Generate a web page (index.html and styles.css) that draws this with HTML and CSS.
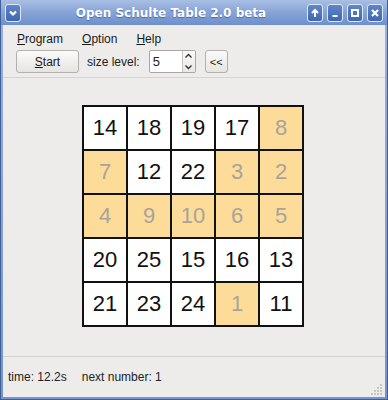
FILE: index.html
```html
<!DOCTYPE html>
<html lang="en">
<head>
    <meta charset="UTF-8">
    <title>Open Schulte Table 2.0 beta</title>
    <link rel="stylesheet" href="styles.css">
</head>
<body>
    <div class="window">
        <div class="titlebar">
            <span class="tb-btn menu-btn">
                <svg width="10" height="10" viewBox="0 0 10 10"><path d="M2 3.5 L5 6.5 L8 3.5" stroke="#fff" stroke-width="2.2" fill="none"/></svg>
            </span>
            <span class="title">Open Schulte Table 2.0 beta</span>
            <span class="tb-btn">
                <svg width="10" height="10" viewBox="0 0 10 10"><path d="M5 9 V2 M2 5 L5 2 L8 5" stroke="#fff" stroke-width="2" fill="none"/></svg>
            </span>
            <span class="tb-btn">
                <svg width="10" height="10" viewBox="0 0 10 10"><rect x="2.5" y="7" width="5" height="2" fill="#fff"/></svg>
            </span>
            <span class="tb-btn">
                <svg width="10" height="10" viewBox="0 0 10 10"><rect x="2" y="2" width="6" height="6" stroke="#fff" stroke-width="2" fill="none"/></svg>
            </span>
            <span class="tb-btn">
                <svg width="10" height="10" viewBox="0 0 10 10"><path d="M2 2 L8 8 M8 2 L2 8" stroke="#fff" stroke-width="2.2" fill="none"/></svg>
            </span>
        </div>

        <div class="content">
            <div class="menubar">
                <span class="menu-item"><u>P</u>rogram</span>
                <span class="menu-item"><u>O</u>ption</span>
                <span class="menu-item"><u>H</u>elp</span>
            </div>

            <div class="toolbar">
                <button class="btn start-btn"><u>S</u>tart</button>
                <span class="label">size level:</span>
                <div class="spinbox">
                    <span class="spin-value">5</span>
                    <div class="spin-arrows">
                        <svg width="9" height="6" viewBox="0 0 9 6"><path d="M1.5 4.5 L4.5 1.5 L7.5 4.5" stroke="#333" stroke-width="1.4" fill="none"/></svg>
                        <svg width="9" height="6" viewBox="0 0 9 6"><path d="M1.5 1.5 L4.5 4.5 L7.5 1.5" stroke="#333" stroke-width="1.4" fill="none"/></svg>
                    </div>
                </div>
                <button class="btn small-btn">&lt;&lt;</button>
            </div>

            <div class="board-area">
                <div class="board">
                    <div class="cell">14</div>
                    <div class="cell">18</div>
                    <div class="cell">19</div>
                    <div class="cell">17</div>
                    <div class="cell done">8</div>
                    <div class="cell done">7</div>
                    <div class="cell">12</div>
                    <div class="cell">22</div>
                    <div class="cell done">3</div>
                    <div class="cell done">2</div>
                    <div class="cell done">4</div>
                    <div class="cell done">9</div>
                    <div class="cell done">10</div>
                    <div class="cell done">6</div>
                    <div class="cell done">5</div>
                    <div class="cell">20</div>
                    <div class="cell">25</div>
                    <div class="cell">15</div>
                    <div class="cell">16</div>
                    <div class="cell">13</div>
                    <div class="cell">21</div>
                    <div class="cell">23</div>
                    <div class="cell">24</div>
                    <div class="cell done">1</div>
                    <div class="cell">11</div>
                </div>
            </div>

            <div class="statusbar">
                <span>time: 12.2s</span>
                <span>next number: 1</span>
                <svg class="grip" width="12" height="12" viewBox="0 0 12 12">
                    <g fill="#c9c7c3">
                        <rect x="9" y="1" width="2" height="2"/>
                        <rect x="6" y="4" width="2" height="2"/><rect x="9" y="4" width="2" height="2"/>
                        <rect x="3" y="7" width="2" height="2"/><rect x="6" y="7" width="2" height="2"/><rect x="9" y="7" width="2" height="2"/>
                        <rect x="0" y="10" width="2" height="2"/><rect x="3" y="10" width="2" height="2"/><rect x="6" y="10" width="2" height="2"/><rect x="9" y="10" width="2" height="2"/>
                    </g>
                </svg>
            </div>
        </div>
    </div>
</body>
</html>
```

FILE: styles.css
```css
html, body {
    margin: 0;
    padding: 0;
}
body {
    width: 388px;
    height: 400px;
    font-family: "Liberation Sans", Arial, sans-serif;
    font-size: 12px;
    color: #222;
    background-color: #4d6aa0;
}
.window {
    width: 388px;
    height: 400px;
    display: flex;
    flex-direction: column;
    box-sizing: border-box;
    border: 1px solid #3f5f96;
    border-top: none;
    background: linear-gradient(#9ab3dd, #7594cd);
}
.titlebar {
    height: 25px;
    display: flex;
    align-items: center;
    padding: 0 4px 0 4px;
    gap: 4px;
    background: linear-gradient(#a9bfe4 0%, #8aa6d8 45%, #6e8fcb 100%);
}
.title {
    flex: 1;
    text-align: center;
    font-family: "DejaVu Sans", sans-serif;
    font-weight: bold;
    font-size: 12px;
    color: #fff;
    text-shadow: 0 1px 1px #4c6aa5;
    margin-left: 14px;
}
.tb-btn {
    width: 16px;
    height: 18px;
    box-sizing: border-box;
    border: 1px solid #dfe7f4;
    border-radius: 3px;
    background: linear-gradient(#5f86c8, #3f68b0);
    display: flex;
    align-items: center;
    justify-content: center;
}
.content {
    flex: 1;
    margin: 0 2px 2px 2px;
    background-color: #edeceb;
    display: flex;
    flex-direction: column;
}
.menubar {
    height: 21px;
    display: flex;
    align-items: flex-end;
    padding-left: 14px;
    gap: 19px;
}
.menu-item {
    color: #1a1a1a;
}
.toolbar {
    height: 31px;
    display: flex;
    align-items: center;
    padding-left: 13px;
    border-bottom: 1px solid #d6d4d1;
}
.btn {
    font-family: "Liberation Sans", Arial, sans-serif;
    font-size: 12px;
    color: #1a1a1a;
    border: 1px solid #b3b1ad;
    border-radius: 3px;
    background: linear-gradient(#fbfbfa, #e5e4e1);
    padding: 0;
}
.start-btn {
    width: 63px;
    height: 23px;
}
.label {
    margin-left: 8px;
}
.spinbox {
    margin-left: 9px;
    width: 47px;
    height: 23px;
    box-sizing: border-box;
    border: 1px solid #a9a7a3;
    border-radius: 2px;
    background-color: #fff;
    display: flex;
}
.spin-value {
    flex: 1;
    padding-left: 3px;
    line-height: 21px;
    font-size: 13px;
}
.spin-arrows {
    width: 12px;
    border-left: 1px solid #c5c3bf;
    background: linear-gradient(#fafafa, #e9e8e6);
    display: flex;
    flex-direction: column;
    justify-content: space-around;
    align-items: center;
}
.small-btn {
    margin-left: 9px;
    width: 23px;
    height: 23px;
    font-size: 11px;
}
.board-area {
    flex: 1;
    display: flex;
    justify-content: center;
    align-items: flex-start;
    padding-top: 27px;
    padding-right: 2px;
}
.board {
    display: grid;
    grid-template-columns: repeat(5, 42px);
    grid-template-rows: repeat(5, 42px);
    gap: 2px;
    padding: 2px;
    background-color: #111;
}
.cell {
    background-color: #fff;
    display: flex;
    align-items: center;
    justify-content: center;
    font-family: "Liberation Sans", Arial, sans-serif;
    font-size: 22px;
    color: #111;
}
.cell.done {
    background-color: #fddb98;
    color: #a8a49c;
}
.statusbar {
    height: 40px;
    border-top: 1px solid #d6d4d1;
    display: flex;
    align-items: center;
    padding-left: 5px;
    gap: 15px;
    position: relative;
    color: #222;
}
.grip {
    position: absolute;
    right: 2px;
    bottom: 2px;
}
```
